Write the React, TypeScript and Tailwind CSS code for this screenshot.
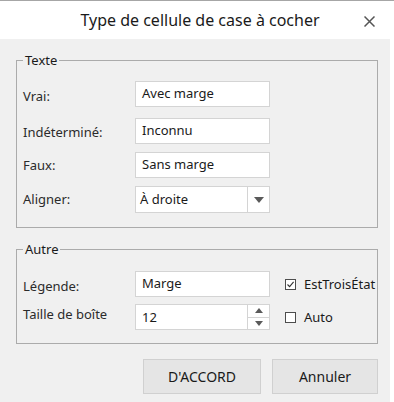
import React from 'react';

const font = { fontFamily: '"Noto Sans", "Segoe UI", sans-serif' };

function TextBox({ value }: { value: string }) {
    return (
        <div className="w-[135px] h-[26px] bg-white border border-[#d4d4d4] flex items-center pl-[6px] text-[13px] text-[#1a1a1a]">
            {value}
        </div>
    );
}

function ComboBox({ value }: { value: string }) {
    return (
        <div className="w-[135px] h-[27px] bg-white border border-[#d4d4d4] flex text-[13px] text-[#1a1a1a]">
            <div className="flex-1 flex items-center pl-[4px] border-r border-[#d4d4d4]">{value}</div>
            <div className="w-[21px] flex items-center justify-center">
                <svg width="10" height="6" viewBox="0 0 10 6">
                    <path d="M0 0 L10 0 L5 6 Z" fill="#5a5a5a" />
                </svg>
            </div>
        </div>
    );
}

function SpinBox({ value }: { value: string }) {
    return (
        <div className="w-[135px] h-[26px] bg-white border border-[#d4d4d4] flex text-[13px] text-[#1a1a1a]">
            <div className="flex-1 flex items-center pl-[6px] pt-[2px] border-r border-[#d4d4d4]">{value}</div>
            <div className="w-[21px] flex flex-col">
                <div className="flex-1 flex items-center justify-center border-b border-[#d4d4d4]">
                    <svg width="8" height="5" viewBox="0 0 8 5">
                        <path d="M0 5 L8 5 L4 0 Z" fill="#5a5a5a" />
                    </svg>
                </div>
                <div className="flex-1 flex items-center justify-center">
                    <svg width="8" height="5" viewBox="0 0 8 5">
                        <path d="M0 0 L8 0 L4 5 Z" fill="#5a5a5a" />
                    </svg>
                </div>
            </div>
        </div>
    );
}

function CheckBox({ label, checked }: { label: string; checked: boolean }) {
    return (
        <div className="flex items-center gap-[8px] text-[13px] text-[#1a1a1a]">
            <div className="w-[11px] h-[11px] border border-[#4d4d4d] bg-white flex items-center justify-center">
                {checked && (
                    <svg width="9" height="9" viewBox="0 0 9 9">
                        <path d="M1.5 4.5 L3.6 6.6 L7.6 1.8" stroke="#333" strokeWidth="1.1" fill="none" />
                    </svg>
                )}
            </div>
            <span>{label}</span>
        </div>
    );
}

function Row({ label, children, offset = '' }: { label: string; children: React.ReactNode; offset?: string }) {
    return (
        <div className="flex items-center">
            <div className={`w-[118px] pl-[6px] text-[13px] text-[#2b2b2b] ${offset}`}>{label}</div>
            {children}
        </div>
    );
}

export default function App() {
    return (
        <div className="w-[394px] h-[402px] bg-white border-t border-[#a6a6a6] flex flex-col" style={font}>
            {/* TITLE BAR */}
            <div className="h-[38px] flex items-center relative">
                <div className="flex-1 text-center text-[16px] text-[#1a1a1a] pl-[6px]">Type de cellule de case à cocher</div>
                <svg className="absolute left-[364px] top-[15px]" width="11" height="11" viewBox="0 0 11 11">
                    <path d="M0.5 0.5 L10.5 10.5 M10.5 0.5 L0.5 10.5" stroke="#555" strokeWidth="1.5" />
                </svg>
            </div>

            {/* BODY */}
            <div className="w-[390px] flex-1 bg-[#f0f0f0] px-[16px] pt-[13px]">
                <fieldset className="w-[362px] border border-[#ababab] pt-[13px] pb-[14px]">
                    <legend className="ml-[6px] px-[2px] text-[13px] leading-[16px] text-[#1a1a1a]">Texte</legend>
                    <Row label="Vrai:" offset="pt-[6px]">
                        <TextBox value="Avec marge" />
                    </Row>
                    <div className="h-[11px]" />
                    <Row label="Indéterminé:" offset="pt-[3px]">
                        <TextBox value="Inconnu" />
                    </Row>
                    <div className="h-[8px]" />
                    <Row label="Faux:" offset="pt-[2px]">
                        <TextBox value="Sans marge" />
                    </Row>
                    <div className="h-[8px]" />
                    <Row label="Aligner:">
                        <ComboBox value="À droite" />
                    </Row>
                </fieldset>

                <fieldset className="w-[362px] mt-[13px] border border-[#ababab] pt-[14px] pb-[13px]">
                    <legend className="ml-[6px] px-[2px] text-[13px] leading-[16px] text-[#1a1a1a]">Autre</legend>
                    <div className="flex">
                        <div className="flex flex-col gap-[7px]">
                            <Row label="Légende:" offset="pt-[5px]">
                                <TextBox value="Marge" />
                            </Row>
                            <Row label="Taille de boîte" offset="pb-[4px]">
                                <SpinBox value="12" />
                            </Row>
                        </div>
                        <div className="flex flex-col pl-[15px] pt-[4px] gap-[13px]">
                            <CheckBox label="EstTroisÉtat" checked />
                            <CheckBox label="Auto" checked={false} />
                        </div>
                    </div>
                </fieldset>

                {/* BUTTONS */}
                <div className="flex justify-end gap-[11px] mt-[15px] mr-[-4px]">
                    <button className="w-[118px] h-[35px] bg-[#e5e5e5] border border-[#d0d0d0] text-[14px] text-[#1a1a1a]">D'ACCORD</button>
                    <button className="w-[106px] h-[35px] bg-[#e5e5e5] border border-[#d0d0d0] text-[14px] text-[#1a1a1a]">Annuler</button>
                </div>
            </div>
        </div>
    );
}
